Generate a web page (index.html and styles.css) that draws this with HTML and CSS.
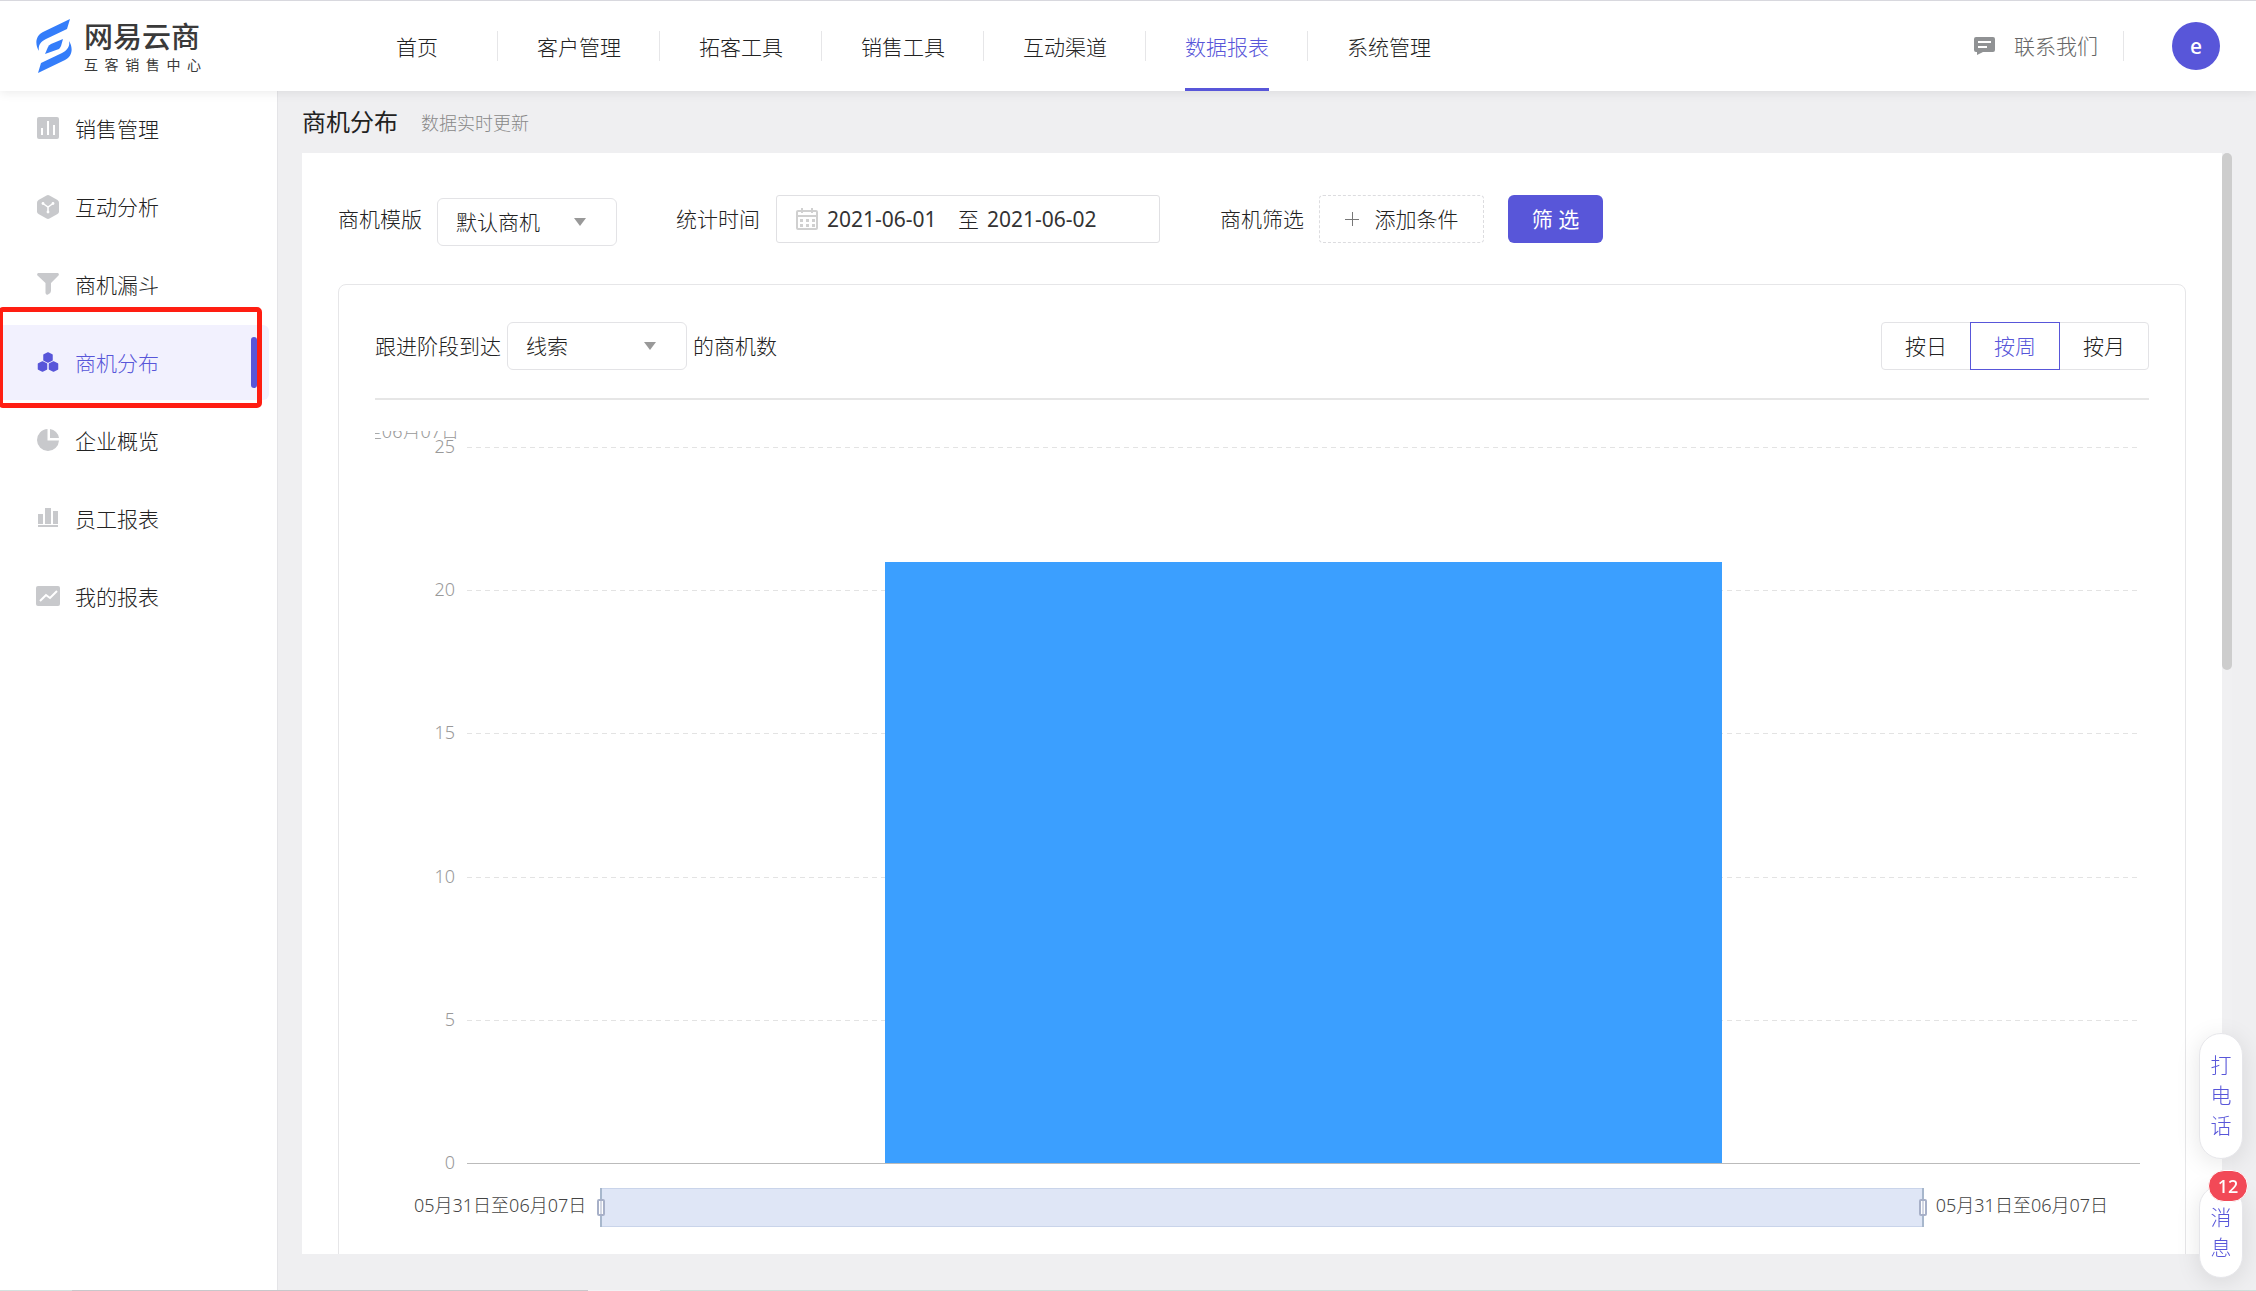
FILE: index.html
```html
<!DOCTYPE html>
<html lang="zh-CN">
<head>
<meta charset="utf-8">
<title>商机分布</title>
<link rel="stylesheet" href="styles.css">
</head>
<body>
<header class="topbar">
  <a class="brand" href="#">
    <svg class="brand-mark" width="36" height="56" viewBox="0 0 36 56" fill="#347dfa" aria-hidden="true">
      <path d="M34 1 L31 11 L10 21 C4 24 2 28 3 33 C-1 27 -1 18 7 14 Z"/>
      <path d="M2 55 L5 45 L26 35 C32 32 34 28 33 23 C37 29 37 38 29 42 Z"/>
      <path d="M27 21 L25 28 Q24 30 23 31 L9 36 L12 29 Q13 27 15 26 Z"/>
    </svg>
    <span class="brand-text">
      <span class="brand-name">网易云商</span>
      <span class="brand-sub">互客销售中心</span>
    </span>
  </a>
  <nav class="topnav">
    <a class="topnav-item" href="#"><span>首页</span></a>
    <a class="topnav-item" href="#"><span>客户管理</span></a>
    <a class="topnav-item" href="#"><span>拓客工具</span></a>
    <a class="topnav-item" href="#"><span>销售工具</span></a>
    <a class="topnav-item" href="#"><span>互动渠道</span></a>
    <a class="topnav-item active" href="#"><span>数据报表</span></a>
    <a class="topnav-item" href="#"><span>系统管理</span></a>
  </nav>
  <a class="contact" href="#">
    <svg width="22" height="18" viewBox="0 0 22 18" aria-hidden="true"><path fill="#909294" d="M2 0H19Q21 0 21 2V13Q21 15 19 15H9L3 18V15H2Q0 15 0 13V2Q0 0 2 0Z"/><path stroke="#fff" stroke-width="2" d="M4 5H17M4 10H13"/></svg>
    <span>联系我们</span>
  </a>
  <button class="avatar" type="button">e</button>
</header>

<div class="body">
  <aside class="sidebar">
    <a class="side-item" href="#">
      <svg width="22" height="24" viewBox="0 0 22 24"><rect width="22" height="22" rx="2" fill="#c8c9cc"/><path stroke="#fff" stroke-width="2" d="M5 11V18M11 4V18M17 8V18"/></svg>
      <span>销售管理</span>
    </a>
    <a class="side-item" href="#">
      <svg width="22" height="24" viewBox="0 0 22 24"><path fill="#c8c9cc" d="M9.500 .500Q11 -.300 12.500 .500L20.500 5Q22 6 22 7.500V16.500Q22 18 20.500 19L12.500 23.500Q11 24.300 9.500 23.500L1.500 19Q0 18 0 16.500V7.500Q0 6 1.500 5Z"/><path fill="none" stroke="#fff" stroke-width="1.500" d="M6 8.500L11 12L16 8.500M11 12V17"/><g fill="#fff"><circle cx="6" cy="8.500" r="1.400"/><circle cx="16" cy="8.500" r="1.400"/><circle cx="11" cy="17" r="1.400"/></g></svg>
      <span>互动分析</span>
    </a>
    <a class="side-item" href="#">
      <svg width="22" height="24" viewBox="0 0 22 24"><path fill="#c8c9cc" d="M1 0H21Q22.500 1 21.500 2.500L14 10V18Q14 20 11 21.500Q9 22.500 8.500 20V10L.500 2.500Q-.500 1 1 0Z"/></svg>
      <span>商机漏斗</span>
    </a>
    <a class="side-item active" href="#">
      <svg width="22" height="24" viewBox="0 0 22 24"><g fill="#5856d9" stroke="#5856d9" stroke-width="1.500" stroke-linejoin="round"><path d="M11 2L15 4V9L11 11L7 9V4ZM5.500 11L9.500 13V18L5.500 20L1.500 18V13ZM16.500 11L20.500 13V18L16.500 20L12.500 18V13Z"/></g></svg>
      <span>商机分布</span>
    </a>
    <a class="side-item" href="#">
      <svg width="22" height="24" viewBox="0 0 22 24"><path fill="#c8c9cc" d="M10.500 0V11.500H22A11 11 0 1 1 10.500 0ZM13 0A10.500 10.500 0 0 1 22 9H13Z"/></svg>
      <span>企业概览</span>
    </a>
    <a class="side-item" href="#">
      <svg width="22" height="24" viewBox="0 0 22 24"><path fill="#c8c9cc" d="M1 7H6V17H1ZM8 1H14V17H8ZM16 4H21V17H16ZM1 18H21V20H1Z"/></svg>
      <span>员工报表</span>
    </a>
    <a class="side-item" href="#">
      <svg class="wide" width="24" height="24" viewBox="0 0 24 24"><rect y="1" width="24" height="20" rx="2" fill="#c8c9cc"/><path fill="none" stroke="#fff" stroke-width="2" d="M4 16L10 10L14 13L21 6"/></svg>
      <span>我的报表</span>
    </a>
    <div class="marker"></div>
  </aside>

  <main class="main">
    <div class="page-head">
      <h1>商机分布</h1>
      <span class="page-note">数据实时更新</span>
    </div>
    <div class="panel-wrap">
      <section class="panel">
        <form class="filters">
          <div class="field field-template">
            <label for="tpl">商机模版</label>
            <span class="select"><select id="tpl"><option>默认商机</option></select></span>
          </div>
          <div class="field field-date">
            <label for="from">统计时间</label>
            <div class="date-range">
              <svg width="22" height="24" viewBox="0 0 22 24" fill="none" stroke="#d0d0d0" stroke-width="2"><rect x="1" y="4" width="20" height="18" rx="1"/><path d="M1 9H21M6 1V6M16 1V6"/><path stroke-width="3" stroke-dasharray="3 3" d="M4 13.500H19M4 18.500H19"/></svg>
              <input id="from" type="text" value="2021-06-01">
              <span>至</span>
              <input type="text" value="2021-06-02" aria-label="结束时间">
            </div>
          </div>
          <div class="field field-cond">
            <span>商机筛选</span>
            <button class="add" type="button"><svg width="14" height="14" viewBox="0 0 14 14" stroke="#777" stroke-width="1"><path d="M0 7.500H14M7.500 0V14"/></svg>添加条件</button>
          </div>
          <button class="submit" type="button">筛 选</button>
        </form>

        <section class="card">
          <div class="card-head">
            <label for="stage">跟进阶段到达</label>
            <span class="select select-stage"><select id="stage"><option>线索</option></select></span>
            <span>的商机数</span>
            <div class="segmented">
              <button type="button">按日</button>
              <button class="active" type="button">按周</button>
              <button type="button">按月</button>
            </div>
          </div>
          <div class="chart">
            <div class="clipped"><span>至06月07日</span></div>
            <div class="plot">
              <div class="tick"><span>25</span></div>
              <div class="tick"><span>20</span></div>
              <div class="tick"><span>15</span></div>
              <div class="tick"><span>10</span></div>
              <div class="tick"><span>5</span></div>
              <div class="tick base"><span>0</span></div>
              <div class="bar-area"><div class="bar" style="height:84%"></div></div>
            </div>
            <div class="zoombar">
              <span>05月31日至06月07日</span>
              <div class="range">
                <svg class="handle handle-left" width="8" height="39" viewBox="0 0 8 39"><path stroke="#a7b7cc" stroke-width="2" d="M4 0V39"/><rect x="1" y="12" width="6" height="15" rx="1" fill="#fff" stroke="#a7b0c8" stroke-width="2"/><path stroke="#a7b0c8" d="M4 12V27"/></svg>
                <svg class="handle handle-right" width="8" height="39" viewBox="0 0 8 39"><path stroke="#a7b7cc" stroke-width="2" d="M4 0V39"/><rect x="1" y="12" width="6" height="15" rx="1" fill="#fff" stroke="#a7b0c8" stroke-width="2"/><path stroke="#a7b0c8" d="M4 12V27"/></svg>
              </div>
              <span>05月31日至06月07日</span>
            </div>
          </div>
        </section>
      </section>
      <div class="scrollbar"><div class="thumb"></div></div>
    </div>
  </main>
</div>
<div class="edge"></div>

<div class="floats">
  <button class="float" type="button">打<br>电<br>话</button>
  <button class="float float-msg" type="button">消<br>息<span class="badge">12</span></button>
</div>
</body>
</html>
```
FILE: styles.css
```css
* { box-sizing: border-box; }
html, body { height: 100%; }
body {
  margin: 0;
  display: flex;
  flex-direction: column;
  overflow: hidden;
  background: #efeff1;
  color: #222;
  font: 300 21px/30px "Noto Sans", "Noto Sans CJK SC", sans-serif;
}
a { color: inherit; text-decoration: none; }
button, input, select { font: inherit; color: inherit; }
button { padding: 0; cursor: pointer; }
svg { flex: none; }

.topbar {
  position: relative;
  z-index: 2;
  flex: none;
  display: flex;
  align-items: center;
  height: 91px;
  padding-right: 36px;
  background: #fff;
  border-top: 1px solid #d8d8de;
  box-shadow: 0 2px 10px rgba(0, 0, 0, .08);
}
.brand { display: flex; gap: 12px; width: 336px; padding-left: 36px; color: #3a3a3a; }
.brand-text { display: flex; flex-direction: column; width: 117px; font-weight: 500; }
.brand-name { font-size: 29px; line-height: 38px; white-space: nowrap; }
.brand-sub { font-size: 14px; line-height: 18px; font-weight: 400; text-align-last: justify; }
.topnav { display: flex; flex: 1; height: 100%; }
.topnav-item { display: flex; align-items: center; justify-content: center; width: 162px; position: relative; }
.topnav-item + .topnav-item::before {
  content: "";
  position: absolute;
  left: -1px;
  top: 30px;
  width: 1px;
  height: 30px;
  background: #e6e6e8;
}
.topnav-item span { height: 90px; line-height: 92px; }
.topnav-item.active { color: #5856d9; }
.topnav-item.active span { border-bottom: 3px solid #5856d9; }
.contact {
  display: flex;
  align-items: center;
  gap: 18px;
  height: 30px;
  padding-right: 25px;
  margin-right: 48px;
  border-right: 1px solid #e6e6e8;
  color: #666;
}
.avatar { width: 48px; height: 48px; border: 0; border-radius: 50%; background: #5856d9; color: #fff; font-weight: 500; }

.body { flex: 1; display: flex; min-height: 0; }
.sidebar {
  position: relative;
  flex: none;
  display: flex;
  flex-direction: column;
  gap: 3px;
  width: 278px;
  background: #fff;
  border-right: 1px solid #e4e4e7;
}
.side-item {
  position: relative;
  display: flex;
  align-items: center;
  gap: 16px;
  height: 75px;
  margin-right: 8px;
  padding-left: 37px;
  border-radius: 0 6px 6px 0;
}
.side-item .wide { margin: 0 -1px; }
.side-item.active { background: #f2f1fe; color: #5856d9; }
.side-item.active::after {
  content: "";
  position: absolute;
  right: 12px;
  top: 12px;
  width: 6px;
  height: 51px;
  border-radius: 3px;
  background: #5856d9;
}
.marker {
  position: absolute;
  left: -2px;
  top: 216px;
  width: 264px;
  height: 101px;
  border: 5px solid #ff1e12;
  border-radius: 5px;
}

.main { flex: 1; min-width: 0; display: flex; flex-direction: column; padding: 0 24px 36px; }
.page-head { display: flex; align-items: center; gap: 23px; height: 62px; flex: none; }
h1 { margin: 0; font-size: 24px; font-weight: 400; }
.page-note { padding-top: 2px; font-size: 18px; color: #888; }
.panel-wrap { flex: 1; min-height: 0; display: flex; }
.panel { flex: 1; min-width: 0; overflow: hidden; padding: 41px 36px 0; background: #fff; }
.scrollbar { flex: none; width: 10px; background: #f0f0f2; }
.thumb { height: 47%; border-radius: 5px; background: #cdcdcd; }
.edge {
  flex: none;
  height: 1px;
  background: linear-gradient(90deg, #d3e2df 72px, #c8c8cb 72px 588px, #f2f2f4 588px 660px, #cfe0dc 660px);
}

.filters { display: flex; align-items: center; height: 50px; }
.field { display: flex; align-items: center; gap: 15px; }
.field-template { margin-right: 59px; }
.field-date { gap: 16px; margin-right: 60px; }
.field-cond { margin-right: 24px; }
.select { position: relative; display: block; width: 180px; height: 48px; }
.field-template .select { margin-top: 6px; }
.select select {
  appearance: none;
  width: 100%;
  height: 100%;
  padding: 0 18px;
  border: 1px solid #e3e3e6;
  border-radius: 6px;
  background: #fff;
}
.select::after {
  content: "";
  position: absolute;
  right: 31px;
  top: 20px;
  border: 6px solid transparent;
  border-top: 8px solid #999;
  border-bottom: 0;
  pointer-events: none;
}
.date-range {
  display: flex;
  align-items: center;
  width: 384px;
  height: 48px;
  padding-left: 19px;
  border: 1px solid #e0e0e3;
  border-radius: 3px;
}
.date-range input { width: 114px; padding: 0; margin-left: 9px; border: 0; background: none; outline: 0; font-weight: 400; color: #333; }
.date-range span { margin-left: 17px; }
.date-range span + input { margin-left: 8px; }
.add {
  display: flex;
  align-items: center;
  justify-content: center;
  gap: 16px;
  width: 165px;
  height: 48px;
  border: 1px dashed #dcdcdf;
  border-radius: 4px;
  background: #fff;
}
.submit { width: 95px; height: 48px; border: 0; border-radius: 6px; background: #5856d9; color: #fff; font-weight: 400; }

.card { margin-top: 40px; padding: 37px 36px 60px; border: 1px solid #e6e6e8; border-radius: 8px; }
.card-head { display: flex; align-items: center; height: 78px; padding-bottom: 28px; border-bottom: 2px solid #e6e6e6; }
.select-stage { margin: 0 6px; }
.segmented { display: flex; margin-left: auto; }
.segmented button { width: 90px; height: 48px; margin-left: -1px; border: 1px solid #e3e3e6; background: #fff; }
.segmented button:first-child { border-radius: 4px 0 0 4px; }
.segmented button:last-child { border-radius: 0 4px 4px 0; }
.segmented .active { position: relative; border-color: #5856d9; color: #5856d9; }

.chart { padding-top: 31px; font-size: 18px; }
.clipped { display: flex; align-items: flex-end; justify-content: flex-end; width: 84px; height: 8px; overflow: hidden; color: #999; white-space: nowrap; line-height: 16px; }
.plot { position: relative; display: flex; flex-direction: column; justify-content: space-between; height: 717px; margin: 8px 9px 0 92px; }
.tick { position: relative; height: 1px; background: repeating-linear-gradient(90deg, #e3e3e3 0 5px, transparent 5px 9px); }
.tick span { position: absolute; right: 100%; top: -16px; padding-right: 12px; color: #999; }
.tick.base { background: #bbb; }
.bar-area { position: absolute; inset: 0 0 1px; display: flex; align-items: flex-end; justify-content: center; }
.bar { width: 50%; background: #3b9fff; }
.zoombar { display: flex; align-items: center; gap: 12px; margin: 24px 41px 0 39px; color: #444; }
.zoombar > span { line-height: 34px; padding-bottom: 5px; }
.range { position: relative; flex: 1; height: 39px; margin-left: 2px; border: 1px solid #c9d4ea; background: #dfe6f6; }
.handle { position: absolute; top: -1px; }
.handle-left { left: -4px; }
.handle-right { right: -4px; }

.floats { position: fixed; z-index: 3; right: 13px; bottom: 13px; display: flex; flex-direction: column; gap: 26px; }
.float {
  position: relative;
  width: 44px;
  padding: 16px 0 18px;
  border: 1px solid #e6e6ea;
  border-radius: 22px;
  background: #fff;
  color: #5856d9;
  box-shadow: 0 4px 24px rgba(0, 0, 0, .1);
}
.float-msg { padding: 16px 0 15px; }
.badge {
  position: absolute;
  top: -16px;
  right: -6px;
  width: 40px;
  height: 32px;
  border: 1px solid #fff;
  border-radius: 16px;
  background: #f24957;
  color: #fff;
  font-size: 18px;
  font-weight: 500;
}
```
